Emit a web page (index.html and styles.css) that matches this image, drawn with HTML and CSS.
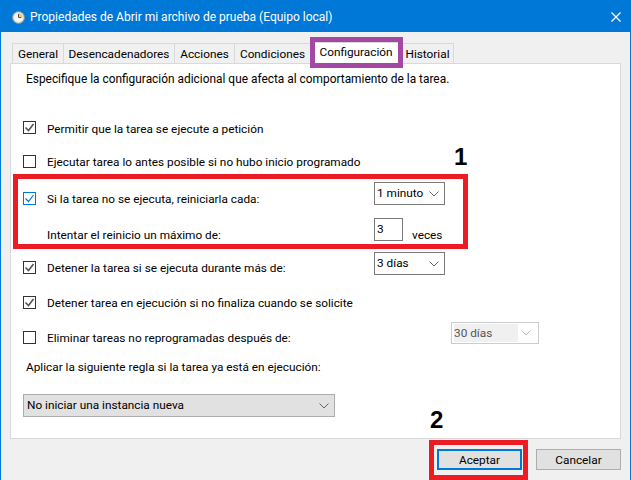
FILE: index.html
```html
<!DOCTYPE html>
<html lang="es">
<head>
<meta charset="utf-8">
<title>Propiedades</title>
<link rel="stylesheet" href="styles.css">
</head>
<body>
<div class="window">
  <header class="titlebar">
    <svg class="clock" width="13" height="13" viewBox="0 0 13 13"><circle cx="6.500" cy="6.500" r="6" fill="#dcdcd8" stroke="#8f8f8a"/><circle cx="6.500" cy="6.500" r="4.400" fill="#f7f7f2"/><path d="M6.500 2.100a4.400 4.400 0 0 1 4.400 4.400H6.500z" fill="#eccd85"/><path d="M6.500 3v3.500h2.800" fill="none" stroke="#555" stroke-width="1"/></svg>
    <span class="title">Propiedades de Abrir mi archivo de prueba (Equipo local)</span>
    <svg class="close" width="10" height="10" viewBox="0 0 10 10"><path d="M.5.5l9 9M9.500.5l-9 9" stroke="#fff" stroke-width="1.300" fill="none"/></svg>
  </header>
  <nav class="tabs">
    <span class="tab tab-general">General</span>
    <span class="tab tab-triggers">Desencadenadores</span>
    <span class="tab tab-actions">Acciones</span>
    <span class="tab tab-conditions">Condiciones</span>
    <span class="tab tab-active">Configuración</span>
    <span class="tab tab-history">Historial</span>
  </nav>
  <main class="panel">
    <p class="intro">Especifique la configuración adicional que afecta al comportamiento de la tarea.</p>
    <div class="row row-allow"><span class="check on"><svg width="11" height="11" viewBox="0 0 11 11"><path d="M1.500 5.500l3 3 5-6.500" fill="none" stroke="#555" stroke-width="1.600"/></svg></span><span class="label">Permitir que la tarea se ejecute a petición</span></div>
    <div class="row row-9"><span class="check"></span><span class="label">Ejecutar tarea lo antes posible si no hubo inicio programado</span></div>
    <div class="row row-13"><span class="check blue"><svg width="11" height="11" viewBox="0 0 11 11"><path d="M1.500 5.500l3 3 5-6.500" fill="none" stroke="#0078d7" stroke-width="1.200"/></svg></span><span class="label">Si la tarea no se ejecuta, reiniciarla cada:</span><span class="control drop up5"><span>1 minuto</span><svg class="chev" width="10" height="6" viewBox="0 0 10 6"><path d="M.5.5L5 5 9.500.5" fill="none" stroke="#666"/></svg></span></div>
    <div class="row row-12"><span class="indent label">Intentar el reinicio un máximo de:</span><span class="control num up5">3</span><span class="veces">veces</span></div>
    <div class="row row-9"><span class="check on"><svg width="11" height="11" viewBox="0 0 11 11"><path d="M1.500 5.500l3 3 5-6.500" fill="none" stroke="#555" stroke-width="1.600"/></svg></span><span class="label">Detener la tarea si se ejecuta durante más de:</span><span class="control drop up4"><span>3 días</span><svg class="chev" width="10" height="6" viewBox="0 0 10 6"><path d="M.5.5L5 5 9.500.5" fill="none" stroke="#666"/></svg></span></div>
    <div class="row row-11"><span class="check on"><svg width="11" height="11" viewBox="0 0 11 11"><path d="M1.500 5.500l3 3 5-6.500" fill="none" stroke="#555" stroke-width="1.600"/></svg></span><span class="label">Detener tarea en ejecución si no finaliza cuando se solicite</span></div>
    <div class="row row-11"><span class="check"></span><span class="label wide">Eliminar tareas no reprogramadas después de:</span><span class="control drop disabled up4"><span class="sel">30 días</span><svg class="chev" width="10" height="6" viewBox="0 0 10 6"><path d="M.5.500L5 5 9.500.5" fill="none" stroke="#bbb"/></svg></span></div>
    <p class="rule">Aplicar la siguiente regla si la tarea ya está en ejecución:</p>
    <div class="control drop instance"><span>No iniciar una instancia nueva</span><svg class="chev" width="10" height="6" viewBox="0 0 10 6"><path d="M.5.5L5 5 9.500.5" fill="none" stroke="#666"/></svg></div>
  </main>
  <footer class="actions">
    <button class="btn primary">Aceptar</button>
    <button class="btn">Cancelar</button>
  </footer>
</div>
<div class="mark mark-tab"></div>
<div class="mark mark-settings"></div>
<div class="mark mark-ok"></div>
<b class="num-label n1">1</b>
<b class="num-label n2">2</b>
</body>
</html>
```
FILE: styles.css
```css
* { box-sizing: border-box; }
html, body { margin: 0; height: 100%; }
body { position: relative; width: 631px; height: 480px; overflow: hidden; font: 11.8px/16px "Roboto", sans-serif; color: #000; background: #f0f0f0; }
.window { width: 631px; height: 480px; border-left: 1px solid #0078d7; border-right: 1px solid #0078d7; display: flex; flex-direction: column; background: #f0f0f0; }
.titlebar { height: 32px; flex: none; background: #0078d7; color: #fff; display: flex; align-items: center; padding: 3px 0 0 11px; font-size: 12px; }
.clock { flex: none; }
.title { margin-left: 5px; flex: 1; position: relative; top: -1px; }
.close { margin-right: 9px; position: relative; top: -1px; }
.tabs { height: 31px; flex: none; display: flex; align-items: flex-end; padding-left: 11px; }
.tab { height: 20px; line-height: 21px; border: 1px solid #d9d9d9; border-bottom: 0; border-right-width: 0; text-align: center; background: #f0f0f0; }
.tab-general { width: 51px; }
.tab-triggers { width: 111px; }
.tab-actions { width: 60px; }
.tab-conditions { width: 76px; }
.tab-active { width: 92px; height: 22px; margin: 0 -1px -1px 0; background: #fff; border-right-width: 1px; position: relative; line-height: 18px; }
.tab-history { width: 53px; border-right-width: 1px; }
.panel { width: 611px; height: 376px; margin-left: 9px; background: #fff; border: 1px solid #d9d9d9; padding: 0 0 0 12px; }
.intro { margin: 0 0 25px 3px; height: 28px; line-height: 30px; font-size: 11.9px; }
.row { display: flex; align-items: flex-start; height: 24px; line-height: 24px; }
.row-9 { margin-top: 9px; }
.row-11 { margin-top: 11px; }
.row-12 { margin-top: 12px; }
.row-13 { margin-top: 13px; }
.check { width: 13px; height: 13px; flex: none; margin: 5px 11px 0 0; border: 1px solid #333; display: block; background: #fff; }
.row-allow .check { margin-top: 4px; }
.check svg { display: block; }
.check.blue { border-color: #0078d7; }
.label { width: 327px; white-space: nowrap; }
.label.wide { width: 404px; }
.indent { margin-left: 24px; }
.control { display: block; height: 23px; border: 1px solid #7a7a7a; background: #fff; line-height: 21px; padding-left: 2px; flex: none; }
.drop { width: 71px; display: flex; align-items: center; justify-content: space-between; padding-right: 5px; }
.num { width: 29px; }
.up5 { margin-top: -5px; }
.up4 { margin-top: -4px; }
.veces { margin-left: 9px; }
.disabled { width: 88px; height: 22px; border-color: #cccccc; color: #555; padding-right: 7px; }
.sel { background: #f0f0f0; width: 64px; line-height: 18px; }
.rule { margin: 5px 0 0 3px; height: 24px; line-height: 24px; }
.instance { width: 312px; margin: 15px 0 0 0; padding-left: 3px; background: #e1e1e1; border-color: #adadad; }
.actions { flex: 1; display: flex; justify-content: flex-end; gap: 14px; padding: 10px 9px 0 0; }
.btn { width: 85px; height: 21px; padding: 1px 0 0; font: inherit; line-height: 17px; background: #e1e1e1; border: 1px solid #adadad; color: #000; }
.btn.primary { border: 2px solid #0078d7; }
.mark { position: absolute; pointer-events: none; }
.mark-tab { left: 310px; top: 37px; width: 93px; height: 31px; border: 5px solid #a349a4; }
.mark-settings { left: 13px; top: 174px; width: 455px; height: 75px; border: 5px solid #ed1c24; }
.mark-ok { left: 429px; top: 440px; width: 99px; height: 40px; border: 5px solid #ed1c24; }
.num-label { position: absolute; font: bold 24px/24px "Liberation Sans", sans-serif; color: #000; }
.n1 { left: 454px; top: 145px; }
.n2 { left: 430px; top: 408px; }
```
